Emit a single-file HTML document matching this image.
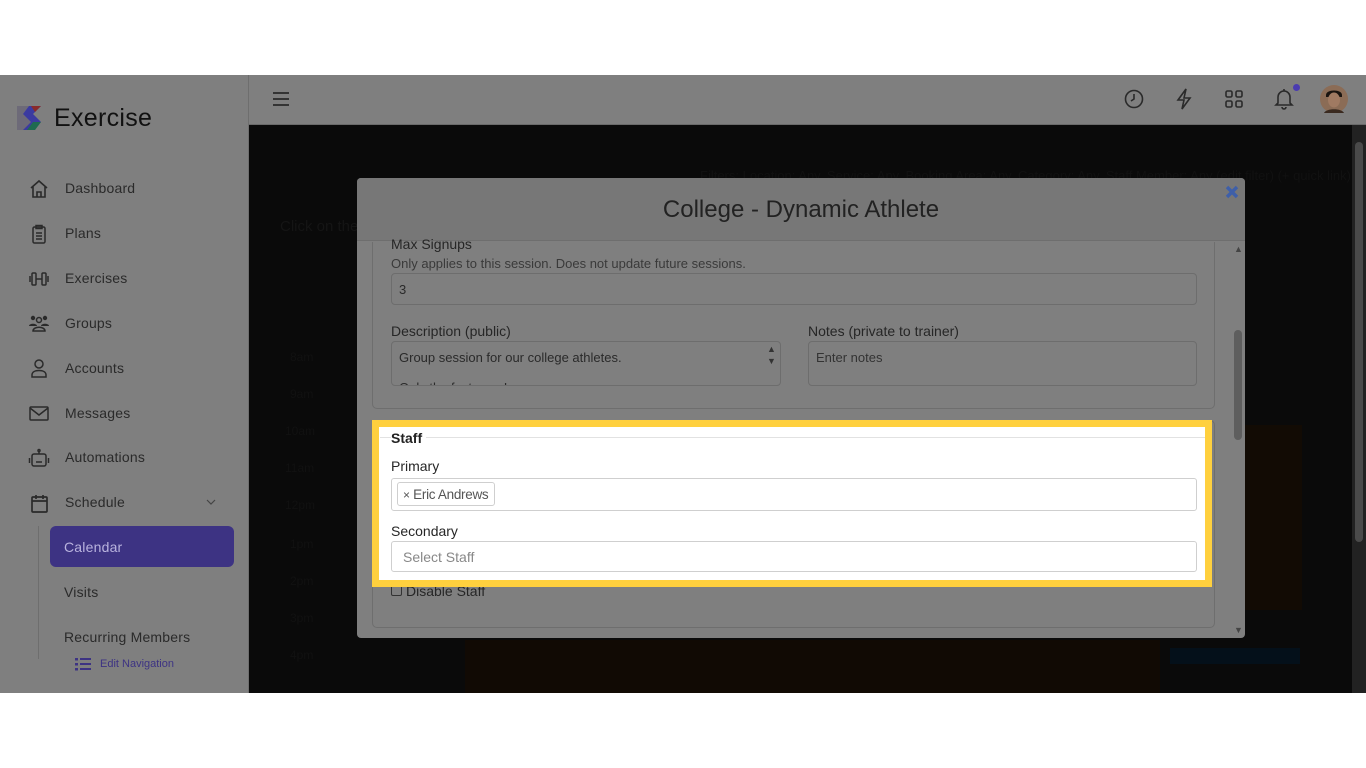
<!DOCTYPE html>
<html><head><meta charset="utf-8"><style>
*{box-sizing:border-box;margin:0;padding:0}
body{width:1366px;height:768px;background:#fff;position:relative;overflow:hidden;font-family:"Liberation Sans",sans-serif}
.abs{position:absolute}
#side{left:0;top:75px;width:249px;height:618px;background:#7f7f7f;border-right:1px solid #6e6e6e}
#top{left:249px;top:75px;width:1117px;height:50px;background:#7f7f7f;border-bottom:1px solid #6a6a6a}
#dark{left:249px;top:125px;width:1117px;height:568px;background:#0a0a0a}
.nav{position:absolute;left:65px;font-size:14px;color:#2a2a2a;letter-spacing:.2px}
.ico{position:absolute;left:28px;width:22px;height:22px}
#modal{left:357px;top:178px;width:888px;height:460px;background:#7f7f7f;border-radius:4px}
#mhead{left:357px;top:178px;width:888px;height:63px;background:#777;border-bottom:1px solid #6e6e6e;border-radius:4px 4px 0 0;text-align:center;font-size:24px;color:#222;line-height:63px}
.lbl{position:absolute;font-size:14px;color:#262626;white-space:nowrap}
.inp{position:absolute;border:1px solid #6d6d6d;border-radius:4px;background:#7f7f7f;font-size:13px;color:#2a2a2a;padding:9px 8px}
.winp{position:absolute;border:1px solid #cfcfcf;border-radius:3px;background:#fff;font-size:14px}
.hr{position:absolute;font-size:12px;color:#111}
</style></head><body>
<div id="side" class="abs"></div>
<div id="top" class="abs"></div>
<div id="dark" class="abs"></div>
<div class="hr abs" style="left:290px;top:350px">8am</div>
<div class="hr abs" style="left:290px;top:387px">9am</div>
<div class="hr abs" style="left:285px;top:424px">10am</div>
<div class="hr abs" style="left:285px;top:461px">11am</div>
<div class="hr abs" style="left:285px;top:498px">12pm</div>
<div class="hr abs" style="left:290px;top:537px">1pm</div>
<div class="hr abs" style="left:290px;top:574px">2pm</div>
<div class="hr abs" style="left:290px;top:611px">3pm</div>
<div class="hr abs" style="left:290px;top:648px">4pm</div>
<div class="abs" style="left:280px;top:218px;font-size:15px;color:#151515">Click on the</div>
<div class="abs" style="left:1245px;top:425px;width:57px;height:185px;background:#120b04"></div>
<div class="abs" style="left:465px;top:640px;width:695px;height:53px;background:#110a04"></div>
<div class="abs" style="left:1170px;top:648px;width:130px;height:16px;background:#04101a"></div>
<div class="abs" style="left:1352px;top:125px;width:14px;height:568px;background:#222"></div>
<div class="abs" style="left:1355px;top:142px;width:8px;height:400px;background:#4a4a4a;border-radius:4px"></div>
<div class="abs" style="left:700px;top:168px;font-size:13px;color:#111;white-space:nowrap">Filters: Location: Any, Service: Any, Booking Area: Any, Category: Any, Staff Member: Any (edit filter) (+ quick link)</div>

<svg class="abs" style="left:17px;top:104px" width="28" height="28" viewBox="0 0 28 28">
<rect x="0" y="2" width="14" height="24" fill="#6d6a78"/>
<path d="M12 2h12l-8 8 8 8-8 8h-10l8-8-8-8z" fill="#3b3aa0"/>
<path d="M14 2h10l-6 6z" fill="#8a2a2a"/><path d="M16 18l8 0-6 8h-8z" fill="#1f6a50"/></svg>
<div class="abs" style="left:54px;top:104px;font-size:25px;color:#111;letter-spacing:.3px">Exercise</div>

<svg class="ico" style="top:178px" viewBox="0 0 22 22" fill="none" stroke="#2a2a2a" stroke-width="1.6"><path d="M3 10L11 3l8 7M5 8.5V19h12V8.5M9 19v-5h4v5"/></svg>
<div class="nav" style="top:180px">Dashboard</div>
<svg class="ico" style="top:223px" viewBox="0 0 22 22" fill="none" stroke="#2a2a2a" stroke-width="1.5"><rect x="5" y="4" width="12" height="16" rx="1.5"/><rect x="8" y="2.5" width="6" height="3"/><path d="M8 10h6M8 13h6M8 16h6"/></svg>
<div class="nav" style="top:225px">Plans</div>
<svg class="ico" style="top:268px" viewBox="0 0 22 22" fill="none" stroke="#2a2a2a" stroke-width="1.5"><rect x="4" y="5" width="4" height="12" rx="1"/><rect x="14" y="5" width="4" height="12" rx="1"/><path d="M8 11h6M2 8v6M20 8v6"/></svg>
<div class="nav" style="top:270px">Exercises</div>
<svg class="ico" style="top:312px" viewBox="0 0 22 22" fill="#2a2a2a"><circle cx="5" cy="6" r="2.2"/><circle cx="17" cy="6" r="2.2"/><circle cx="11" cy="8" r="2.5" fill="none" stroke="#2a2a2a" stroke-width="1.5"/><path d="M1 14c0-3 8-3 8 0z"/><path d="M13 14c0-3 8-3 8 0z"/><path d="M5 19c0-5 12-5 12 0z" fill="none" stroke="#2a2a2a" stroke-width="1.5"/></svg>
<div class="nav" style="top:315px">Groups</div>
<svg class="ico" style="top:357px" viewBox="0 0 22 22" fill="none" stroke="#2a2a2a" stroke-width="1.5"><circle cx="11" cy="7" r="4"/><path d="M4 20v-2c0-3 3-4.5 7-4.5s7 1.5 7 4.5v2z"/></svg>
<div class="nav" style="top:360px">Accounts</div>
<svg class="ico" style="top:402px" viewBox="0 0 22 22" fill="none" stroke="#2a2a2a" stroke-width="1.5"><rect x="2" y="5" width="18" height="13" rx="1"/><path d="M2 6l9 7 9-7"/></svg>
<div class="nav" style="top:405px">Messages</div>
<svg class="ico" style="top:447px" viewBox="0 0 22 22" fill="none" stroke="#2a2a2a" stroke-width="1.5"><rect x="4" y="7" width="14" height="12" rx="2"/><path d="M11 7V4M1.5 11v5M20.5 11v5"/><circle cx="11" cy="3.5" r="1"/><path d="M8 15h6" stroke-width="1.5"/></svg>
<div class="nav" style="top:449px">Automations</div>
<svg class="ico" style="top:492px" viewBox="0 0 22 22" fill="none" stroke="#2a2a2a" stroke-width="1.7"><rect x="4" y="5" width="15" height="15" rx="1"/><path d="M4 9h15M8 3v4M15 3v4"/></svg>
<div class="nav" style="top:494px">Schedule</div>
<svg class="abs" style="left:205px;top:497px" width="12" height="10" viewBox="0 0 12 10" fill="none" stroke="#444" stroke-width="1.2"><path d="M2 3l4 4 4-4"/></svg>
<div class="abs" style="left:38px;top:526px;width:1px;height:133px;background:#6e6e6e"></div>
<div class="abs" style="left:50px;top:526px;width:184px;height:41px;background:#3d3383;border-radius:6px"></div>
<div class="nav" style="left:64px;top:539px;color:#b9b3de">Calendar</div>
<div class="nav" style="left:64px;top:584px">Visits</div>
<div class="nav" style="left:64px;top:629px">Recurring Members</div>
<svg class="abs" style="left:75px;top:657px" width="16" height="14" viewBox="0 0 16 14" fill="#3d3383"><rect x="0" y="1" width="3" height="2.5"/><rect x="0" y="6" width="3" height="2.5"/><rect x="0" y="11" width="3" height="2.5"/><rect x="5" y="1" width="11" height="2"/><rect x="5" y="6" width="11" height="2"/><rect x="5" y="11" width="11" height="2"/></svg>
<div class="abs" style="left:100px;top:658px;font-size:11px;color:#3d3383">Edit Navigation</div>

<svg class="abs" style="left:272px;top:91px" width="18" height="16" viewBox="0 0 18 16" stroke="#2a2a2a" stroke-width="1.8"><path d="M1 2h16M1 8h16M1 14h16"/></svg>
<svg class="abs" style="left:1124px;top:89px" width="20" height="20" viewBox="0 0 20 20" fill="none" stroke="#2a2a2a" stroke-width="1.6"><circle cx="10" cy="10" r="8.5"/><path d="M10 5v5l-3 2"/></svg>
<svg class="abs" style="left:1175px;top:88px" width="18" height="22" viewBox="0 0 18 22" fill="none" stroke="#2a2a2a" stroke-width="1.6"><path d="M11 1L3 12h6l-2 9 8-11h-6z"/></svg>
<svg class="abs" style="left:1225px;top:90px" width="18" height="18" viewBox="0 0 18 18" fill="none" stroke="#2a2a2a" stroke-width="1.6"><rect x="1" y="1" width="6" height="6" rx="1.5"/><rect x="11" y="1" width="6" height="6" rx="1.5"/><rect x="1" y="11" width="6" height="6" rx="1.5"/><rect x="11" y="11" width="6" height="6" rx="1.5"/></svg>
<svg class="abs" style="left:1274px;top:88px" width="20" height="22" viewBox="0 0 20 22" fill="none" stroke="#2a2a2a" stroke-width="1.6"><path d="M4 15V9a6 6 0 0112 0v6l2 2H2z"/><path d="M8 19a2 2 0 004 0M10 1v2"/></svg>
<div class="abs" style="left:1293px;top:84px;width:7px;height:7px;border-radius:50%;background:#4a3bb0"></div>
<svg class="abs" style="left:1320px;top:85px" width="28" height="28" viewBox="0 0 28 28"><circle cx="14" cy="14" r="14" fill="#8b6c56"/><path d="M6 10c0-6 16-6 16 0v2H6z" fill="#1a1410"/><ellipse cx="14" cy="15" rx="6" ry="7.5" fill="#a07a62"/><path d="M4 28c2-5 18-5 20 0z" fill="#3a2a20"/></svg>

<div id="modal" class="abs"></div>
<div id="mhead" class="abs">College - Dynamic Athlete</div>
<svg class="abs" style="left:1225px;top:185px" width="14" height="14" viewBox="0 0 14 14" stroke="#3e5fa8" stroke-width="3.5"><path d="M2 2l10 10M12 2L2 12"/></svg>
<div class="abs" style="left:1234px;top:330px;width:8px;height:110px;background:#5e5e5e;border-radius:4px"></div>
<div class="abs" style="left:1234px;top:244px;font-size:9px;color:#444">▲</div>
<div class="abs" style="left:1234px;top:625px;font-size:9px;color:#444">▼</div>
<div class="abs" style="left:372px;top:242px;width:843px;height:167px;border:1px solid #6e6e6e;border-top:none;border-radius:0 0 5px 5px"></div>
<div class="abs" style="left:372px;top:420px;width:843px;height:208px;border:1px solid #6e6e6e;border-radius:5px"></div>
<div class="lbl" style="left:391px;top:236px">Max Signups</div>
<div class="lbl" style="left:391px;top:256px;font-size:13px;color:#3a3a3a">Only applies to this session. Does not update future sessions.</div>
<div class="inp" style="left:391px;top:273px;width:806px;height:32px;padding:8px 7px">3</div>
<div class="lbl" style="left:391px;top:323px">Description (public)</div>
<div class="lbl" style="left:808px;top:323px">Notes (private to trainer)</div>
<div class="inp" style="left:391px;top:341px;width:390px;height:45px;overflow:hidden;line-height:15px;padding:8px 7px">Group session for our college athletes.<br><br>Only the fast ones!</div>
<div class="abs" style="left:767px;top:343px;font-size:9px;color:#333;line-height:12px">▲<br>▼</div>
<div class="inp" style="left:808px;top:341px;width:389px;height:45px;padding:8px 7px;color:#333">Enter notes</div>
<div class="abs" style="left:391px;top:585px;width:11px;height:11px;border:1px solid #333;border-radius:2px"></div>
<div class="lbl" style="left:406px;top:583px;font-size:14px">Disable Staff</div>

<div class="abs" style="left:372px;top:420px;width:840px;height:167px;background:#fff;border:7px solid #ffd03e"></div>
<div class="abs" style="left:380px;top:437px;width:825px;height:1px;background:#e2e2e2"></div>
<div class="lbl" style="left:391px;top:430px;font-weight:bold;color:#222;background:#fff;padding-right:4px">Staff</div>
<div class="lbl" style="left:391px;top:458px">Primary</div>
<div class="winp" style="left:391px;top:478px;width:806px;height:33px"></div>
<div class="abs" style="left:397px;top:482px;width:98px;height:24px;border:1px solid #cfcfcf;border-radius:3px;font-size:13.5px;color:#555;padding:4px 0 0 5px;white-space:nowrap;letter-spacing:-.3px;overflow:hidden"><span style="font-size:12px">×</span> Eric Andrews</div>
<div class="lbl" style="left:391px;top:523px">Secondary</div>
<div class="winp" style="left:391px;top:541px;width:806px;height:31px;color:#888;padding:7px 11px">Select Staff</div>
</body></html>
